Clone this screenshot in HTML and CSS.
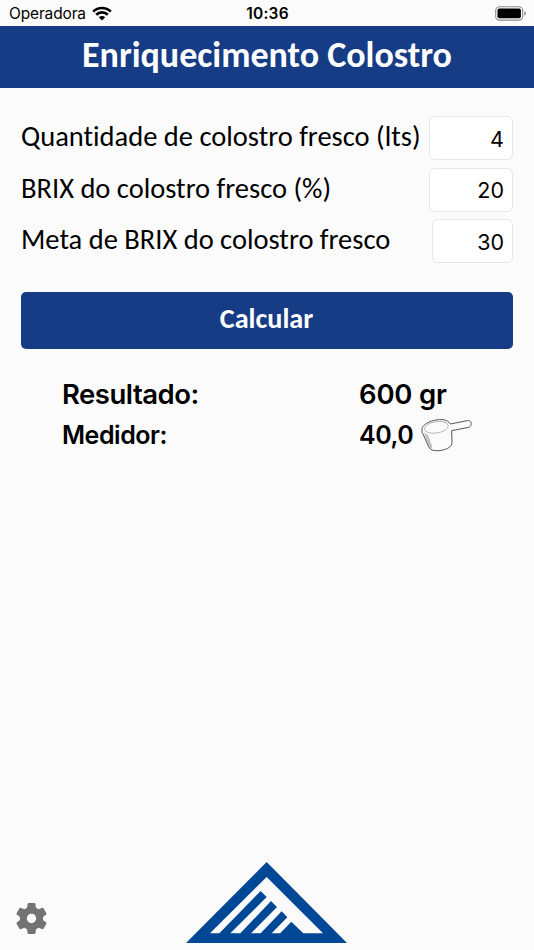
FILE: index.html
```html
<!DOCTYPE html>
<html lang="pt">
<head>
    <meta charset="UTF-8">
    <meta name="viewport" content="width=device-width, initial-scale=1.0">
    <title>Enriquecimento Colostro</title>
    <link rel="stylesheet" href="styles.css">
</head>
<body>
    <div class="status-bar">
        <div class="carrier">
            <span class="carrier-name">Operadora</span>
            <svg class="wifi" viewBox="0 0 20 15">
                <path d="M1.2 5.6 A12.6 12.6 0 0 1 18.8 5.6" />
                <path d="M4.2 8.7 A8.3 8.3 0 0 1 15.8 8.7" />
                <path class="dot" d="M10 14.6 L6.8 11.3 A4.6 4.6 0 0 1 13.2 11.3 Z" />
            </svg>
        </div>
        <span class="clock">10:36</span>
        <svg class="battery" viewBox="0 0 32 15">
            <rect class="shell" x="0.7" y="0.7" width="27" height="13.4" rx="3.8" />
            <rect x="2.5" y="2.5" width="23.4" height="9.8" rx="1.8" />
            <path class="tip" d="M29.3 5 Q31 5.7 31 7.4 Q31 9.1 29.3 9.8 Z" />
        </svg>
    </div>

    <header class="header">
        <h1>Enriquecimento Colostro</h1>
    </header>

    <main>
        <form id="colostroForm">
            <div class="row">
                <label for="quantidade">Quantidade de colostro fresco (lts)</label>
                <input type="text" id="quantidade" name="quantidade" value="4">
            </div>
            <div class="row">
                <label for="brix">BRIX do colostro fresco (%)</label>
                <input type="text" id="brix" name="brix" value="20">
            </div>
            <div class="row">
                <label for="meta">Meta de BRIX do colostro fresco</label>
                <input type="text" id="meta" name="meta" class="short" value="30">
            </div>
            <button type="button">Calcular</button>
        </form>

        <div class="results">
            <div class="result resultado">
                <span class="name">Resultado:</span>
                <span class="value">600 gr</span>
            </div>
            <div class="result medidor">
                <span class="name">Medidor:</span>
                <span class="value">40,0</span>
                <svg class="scoop" viewBox="0 0 156 102">
                    <path d="M6 38 C3 25 20 12 43 7 C65 2 84 5 91 18 L142 8 C154 5 159 23 146 28 L95 38 L96 73 C97 88 75 97 56 98 C42 99 31 96 27 88 L8 46 Q5 43 6 38 Z" />
                    <ellipse class="thin" cx="49" cy="28" rx="36" ry="17" transform="rotate(-9 49 28)" />
                    <path class="thin" d="M14 46 L29 86 Q36 94 34 83 L22 50" />
                    <path class="thin" d="M18 48 L33 88" />
                </svg>
            </div>
        </div>
    </main>

    <footer>
        <svg class="gear" viewBox="2 2 20 20">
            <path d="M19.43 12.98c.04-.32.07-.64.07-.98s-.03-.66-.07-.98l2.11-1.65c.19-.15.24-.42.12-.64l-2-3.46c-.12-.22-.39-.3-.61-.22l-2.49 1c-.52-.4-1.08-.73-1.69-.98l-.38-2.65C14.46 2.18 14.25 2 14 2h-4c-.25 0-.46.18-.49.42l-.38 2.65c-.61.25-1.17.59-1.69.98l-2.49-1c-.23-.09-.49 0-.61.22l-2 3.46c-.13.22-.07.49.12.64l2.11 1.65c-.04.32-.07.65-.07.98s.03.66.07.98l-2.11 1.65c-.19.15-.24.42-.12.64l2 3.46c.12.22.39.3.61.22l2.49-1c.52.4 1.08.73 1.69.98l.38 2.65c.03.24.24.42.49.42h4c.25 0 .46-.18.49-.42l.38-2.65c.61-.25 1.17-.59 1.69-.98l2.49 1c.23.09.49 0 .61-.22l2-3.46c.12-.22.07-.49-.12-.64l-2.11-1.65zM12 15c-1.66 0-3-1.34-3-3s1.34-3 3-3 3 1.34 3 3-1.34 3-3 3z" />
        </svg>
        <svg class="logo" viewBox="0 0 483 243">
            <path d="M242 0 L483 243 H0 Z" />
            <path class="inner" d="M242 45 L411 214 H72 Z" />
            <path d="M224 87 L242 105 L133 214 V216 H100 V214 Z" />
            <path d="M255 117 L273 135 L195 214 V216 H163 V214 Z" />
            <path d="M287 148 L304 166 L257 214 V216 H224 V214 Z" />
            <path d="M316 179 L352 214 V216 H283 V213 Z" />
        </svg>
    </footer>
</body>
</html>
```

FILE: styles.css
```css
* {
    box-sizing: border-box;
}

body {
    font-family: Inter, "Liberation Sans", sans-serif;
    display: flex;
    flex-direction: column;
    height: 100vh;
    margin: 0;
    background-color: #fbfbfb;
    color: #000;
}

.status-bar {
    display: grid;
    grid-template-columns: 1fr auto 1fr;
    align-items: center;
    height: 26px;
    padding: 1px 8px 0 9px;
    font-size: 15.5px;
}

.carrier {
    display: flex;
    align-items: center;
    gap: 6px;
}

.carrier-name {
    letter-spacing: -0.15px;
}

.wifi {
    width: 20px;
    height: 15px;
    fill: none;
    stroke: #000;
    stroke-width: 2.6;
}

.wifi .dot {
    fill: #000;
    stroke: none;
}

.clock {
    font-weight: 600;
    letter-spacing: 0.2px;
}

.battery {
    width: 32px;
    height: 15px;
    justify-self: end;
    margin-right: -1px;
}

.battery .shell {
    fill: none;
    stroke: #8c8c8c;
    stroke-width: 1.1;
}

.battery .tip {
    fill: #8c8c8c;
}

.header {
    height: 62px;
    background-color: #163c86;
    color: #fff;
    text-align: center;
}

h1 {
    margin: 0;
    font-family: Carlito, Lato, sans-serif;
    font-size: 36px;
    line-height: 58px;
    font-weight: bold;
    font-variant-ligatures: none;
}

main {
    flex: 1;
    padding: 28px 21px 0;
}

.row {
    display: flex;
    justify-content: space-between;
    align-items: center;
    height: 44px;
    margin-bottom: 7.6px;
}

label {
    font-family: Carlito, Lato, sans-serif;
    font-size: 28.5px;
    line-height: 40px;
    padding-bottom: 2px;
    white-space: nowrap;
    font-variant-ligatures: none;
}

input {
    width: 84px;
    height: 44px;
    padding: 1px 8px 0 0;
    border: 1px solid #e6e6e6;
    border-radius: 6px;
    background-color: #fff;
    font-family: inherit;
    font-size: 21.5px;
    text-align: right;
}

input.short {
    width: 81px;
}

button {
    display: block;
    width: 100%;
    height: 57px;
    margin-top: 29px;
    padding: 0 1px 4px 0;
    border: none;
    border-radius: 5px;
    background-color: #163c86;
    color: #fff;
    font-family: Carlito, Lato, sans-serif;
    font-size: 28.2px;
    font-weight: bold;
}

.results {
    padding: 24px 0 0 41px;
}

.result {
    display: flex;
    align-items: center;
    height: 41px;
    font-weight: 600;
}

.result .name {
    width: 297px;
}

.resultado {
    font-size: 27.5px;
    letter-spacing: -0.5px;
}

.resultado .value {
    letter-spacing: -0.2px;
}

.medidor {
    height: 42px;
    font-size: 25px;
    letter-spacing: -0.45px;
}

.scoop {
    width: 52px;
    height: 34px;
    margin-left: 7px;
    fill: none;
    stroke: #555;
    stroke-width: 3;
}

.scoop .thin {
    stroke: #999;
    stroke-width: 2;
}

footer {
    display: grid;
    grid-template-columns: 1fr auto 1fr;
    align-items: end;
    padding: 0 17px 6.7px 16px;
}

.gear {
    width: 31px;
    height: 31px;
    margin-bottom: 9.5px;
    fill: #737373;
}

.logo {
    width: 161px;
    height: 81px;
    fill: #004795;
}

.logo .inner {
    fill: #fbfbfb;
}
```
